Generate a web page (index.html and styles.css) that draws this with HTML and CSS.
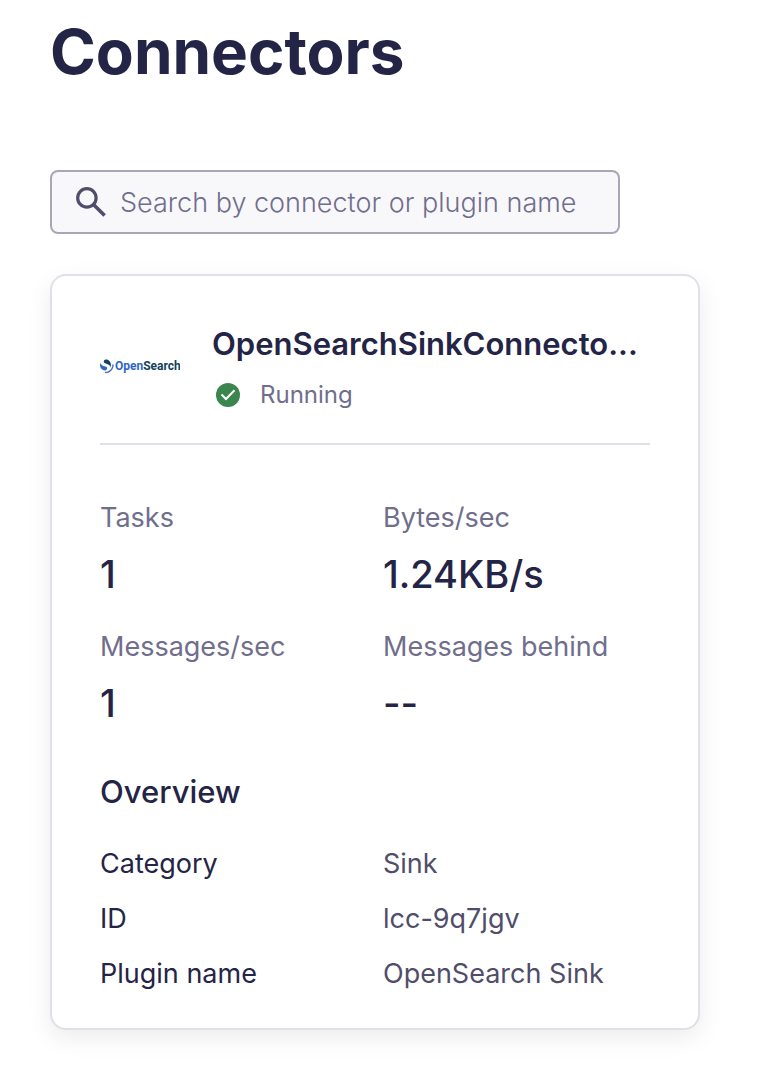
FILE: index.html
```html
<!DOCTYPE html>
<html lang="en">
<head>
<meta charset="utf-8">
<meta name="viewport" content="width=device-width, initial-scale=1">
<title>Connectors</title>
<link rel="stylesheet" href="styles.css">
</head>
<body>
<main class="page">
  <h1 class="page-title">Connectors</h1>
  <div class="search">
    <svg class="search-icon" viewBox="0 0 30 30" aria-hidden="true">
      <circle cx="10.9" cy="10.9" r="9.2" fill="none" stroke="#504d6a" stroke-width="3.2"/>
      <path d="M17.2 17.2L28.6 28.6" stroke="#504d6a" stroke-width="3.6"/>
    </svg>
    <input class="search-input" type="search" aria-label="Search connectors" placeholder="Search by connector or plugin name">
  </div>
  <article class="card">
    <header class="card-header">
      <svg class="logo" viewBox="0 0 80 20" role="img" aria-label="OpenSearch">
        <g transform="translate(0 3.5) scale(.21)">
          <path d="M61.7 23.5C60.5 23.5 59.5 24.5 59.5 25.8C59.5 44.4 44.4 59.5 25.8 59.5C24.5 59.5 23.5 60.5 23.5 61.7C23.5 63 24.5 64 25.8 64C46.9 64 64 46.9 64 25.8C64 24.5 63 23.5 61.7 23.5Z" fill="#2f68c4" stroke="#2f68c4" stroke-width="2"/>
          <path d="M48.1 38C50.3 34.5 52.4 29.7 51.9 23.1C51.1 9.4 38.7-1 26.9.1C22.3.5 17.6 4.3 18 11C18.2 13.9 19.6 15.6 22 16.9C24.2 18.2 27 19 30.2 19.9C34.1 21 38.6 22.2 42.1 24.8C46.2 27.8 49 31.4 48.1 38Z" fill="#123f62"/>
          <path d="M3.9 14C1.7 17.5-.4 22.3.1 28.9C.9 42.6 13.3 53 25.1 51.9C29.7 51.5 34.4 47.7 34 41C33.8 38.1 32.4 36.4 30 35.1C27.8 33.8 25 33 21.8 32.1C17.9 31 13.4 29.8 9.9 27.2C5.8 24.2 3 20.6 3.9 14Z" fill="#2f68c4"/>
        </g>
        <text class="logo-text" x="15" y="14" fill="#2f68c4">Open<tspan fill="#123f5c">Search</tspan></text>
      </svg>
      <div class="heading">
        <h2 class="name">OpenSearchSinkConnecto...</h2>
        <p class="status">
          <svg class="status-icon" viewBox="0 0 24 24" aria-hidden="true">
            <circle cx="12" cy="12" r="12" fill="#3b854e"/>
            <path d="M5.5 11.5L10 16L18.5 7.2" fill="none" stroke="#fff" stroke-width="2"/>
          </svg>
          Running
        </p>
      </div>
    </header>
    <dl class="metrics">
      <div><dt>Tasks</dt><dd>1</dd></div>
      <div><dt>Bytes/sec</dt><dd>1.24KB/s</dd></div>
      <div><dt>Messages/sec</dt><dd>1</dd></div>
      <div><dt>Messages behind</dt><dd>--</dd></div>
    </dl>
    <h3 class="overview-title">Overview</h3>
    <dl class="overview">
      <dt>Category</dt><dd>Sink</dd>
      <dt>ID</dt><dd>lcc-9q7jgv</dd>
      <dt>Plugin name</dt><dd>OpenSearch Sink</dd>
    </dl>
  </article>
</main>
</body>
</html>
```

FILE: styles.css
```css
* { box-sizing: border-box; }

body {
  margin: 0;
  background: #fff;
  color: #242446;
  font-family: Inter, "Liberation Sans", sans-serif;
}

h1, h2, h3, p, dl, dd { margin: 0; }

.page {
  max-width: 750px;
  padding: 12px 50px 42px;
}

.page-title {
  font-size: 62px;
  line-height: 80px;
  font-weight: 700;
}

.search {
  display: flex;
  align-items: center;
  gap: 14px;
  max-width: 570px;
  height: 64px;
  margin-top: 78px;
  padding: 0 12px 0 24px;
  border: 2px solid #a9a6b8;
  border-radius: 8px;
  background: #f8f8fb;
}

.search-icon {
  flex: none;
  width: 30px;
  height: 30px;
}

.search-input {
  flex: 1;
  min-width: 0;
  padding: 2px 0 0;
  border: 0;
  outline: 0;
  appearance: none;
  background: transparent;
  color: #242446;
  font: 300 27px/40px Inter, "Liberation Sans", sans-serif;
}

.search-input::placeholder {
  color: #706e8c;
  opacity: 1;
}

.card {
  margin-top: 40px;
  padding: 45px 48px 34px;
  border: 2px solid #e1e0e8;
  border-radius: 16px;
  background: #fff;
  box-shadow: 0 8px 24px rgba(0, 0, 0, 0.08);
}

.card-header {
  display: flex;
  align-items: center;
  gap: 32px;
  padding-bottom: 32px;
  border-bottom: 2px solid #e1e0e8;
}

.logo {
  flex: none;
  width: 80px;
  height: 20px;
}

.logo-text {
  font: 700 12px Roboto, "Liberation Sans", sans-serif;
}

.heading { min-width: 0; }

.name {
  font-size: 31px;
  line-height: 46px;
  font-weight: 600;
  white-space: nowrap;
}

.status {
  display: flex;
  align-items: center;
  gap: 20px;
  margin-top: 12px;
  padding-left: 4px;
  color: #706e8c;
  font-size: 24px;
  line-height: 32px;
}

.status-icon {
  width: 24px;
  height: 24px;
}

.metrics {
  display: grid;
  grid-template-columns: 1fr 1fr;
  gap: 25px 16px;
  margin-top: 53px;
}

.metrics dt {
  color: #706e8c;
  font-size: 27px;
  line-height: 40px;
}

.metrics dd {
  margin-top: 8px;
  font-size: 38px;
  line-height: 56px;
  font-weight: 500;
}

.overview-title {
  margin-top: 41px;
  font-size: 31px;
  line-height: 40px;
  font-weight: 500;
}

.overview {
  display: grid;
  grid-template-columns: 1fr 1fr;
  gap: 15px 16px;
  margin-top: 32px;
  font-size: 27px;
  line-height: 40px;
}

.overview dd { color: #504d6a; }
```
